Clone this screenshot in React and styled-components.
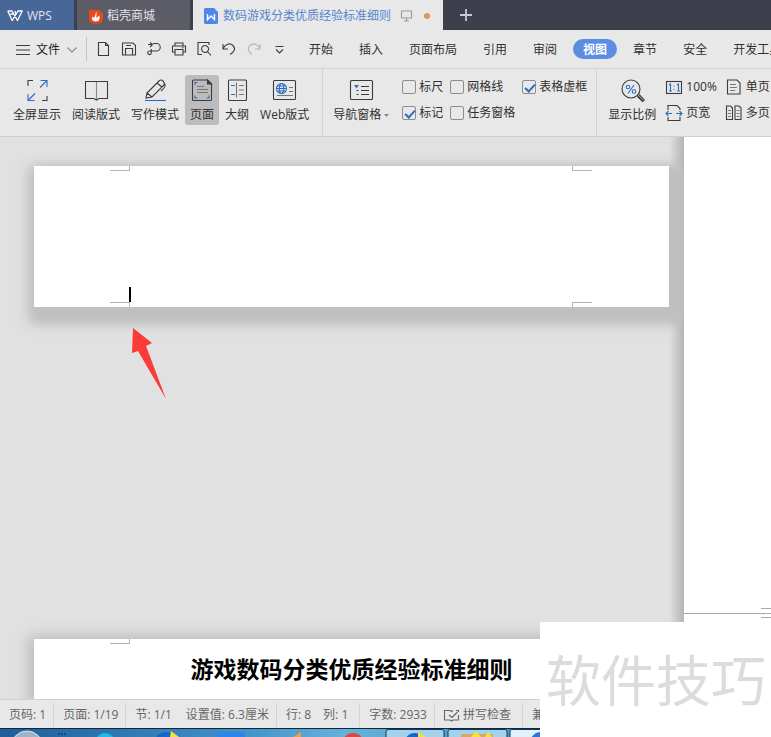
import React from 'react';
import styled, {createGlobalStyle, css} from 'styled-components';

const GlobalStyle = createGlobalStyle`
    * {
        box-sizing: border-box;
    }

    body {
        margin: 0;
        overflow: hidden;
        color: #303030;
        font: 12px/16px "Open Sans", "Noto Sans CJK SC", sans-serif;
    }

    button {
        margin: 0;
        padding: 0;
        border: none;
        background: none;
        color: inherit;
        font: inherit;
        white-space: nowrap;
        cursor: pointer;
    }

    svg {
        display: block;
        flex: none;
        overflow: visible;
    }
`;

const Window = styled.div`
    position: relative;
    display: flex;
    flex-direction: column;
    height: 100vh;
    overflow: hidden;
    background: #e8e8e8;
`;

/* title bar */

const TitleBar = styled.header`
    display: flex;
    flex: none;
    height: 30px;
    background: #3d404c;
`;

const DocTab = styled.button`
    display: flex;
    flex: none;
    align-items: center;
    gap: ${props => props.$gap || 4}px;
    padding: ${props => props.$pad};
    margin-right: ${props => props.$space || 0}px;
    background: ${props => props.$bg};
    color: ${props => props.$color || '#e4e4ea'};
`;

const TabTools = styled.span`
    display: flex;
    align-items: center;
    gap: 12px;
    padding-left: 5px;
`;

const UnsavedDot = styled.i`
    width: 6px;
    height: 6px;
    border-radius: 50%;
    background: #e09a55;
`;

/* menu bar */

const MenuBar = styled.nav`
    display: flex;
    flex: none;
    align-items: center;
    height: 39px;
    padding-left: 16px;
    border-bottom: 1px solid #d2d2d2;
`;

const FileButton = styled.button`
    display: flex;
    flex: none;
    align-items: center;
    gap: 6px;
    padding-top: 2px;
    color: #222;
`;

const MenuDivider = styled.span`
    flex: none;
    width: 1px;
    height: 24px;
    margin: 0 4px 0 9px;
    background: #c4c4c4;
`;

const QuickButton = styled.button`
    display: flex;
    flex: none;
    align-items: center;
    justify-content: center;
    width: 25px;
    height: 24px;
`;

const MenuTabs = styled.div`
    display: flex;
    flex: none;
    gap: 6px;
    padding-left: 8px;
`;

const MenuTab = styled.button`
    height: 20px;
    padding: 2px 10px 0;
    border-radius: 10px;
    ${props => props.$active && css`
        background: #5b8de3;
        color: #fff;
        font-weight: bold;
    `}
`;

/* ribbon */

const Ribbon = styled.section`
    display: flex;
    flex: none;
    height: 68px;
    border-bottom: 1px solid #d0d0d0;
`;

const RibbonGroup = styled.div`
    display: flex;
    flex: none;
    align-items: flex-start;
    gap: 1px;
    padding: 6px ${props => props.$right}px 0 ${props => props.$left}px;

    & + & {
        box-shadow: -1px 0 0 #d2d2d2;
    }
`;

const ToolButton = styled.button`
    display: flex;
    flex-direction: column;
    align-items: center;
    gap: 5px;
    height: 50px;
    padding: 4px 5px 0;
    border-radius: 3px;
    background: ${props => props.$active ? '#bcbcbc' : 'none'};
`;

const ToolLabel = styled.span`
    display: flex;
    align-items: center;
    gap: 3px;
`;

const OptionGrid = styled.div`
    display: grid;
    grid-template-columns: repeat(3, auto);
    grid-auto-rows: 16px;
    gap: 10px 7px;
    padding: 4px 0 0 7px;
`;

const Option = styled.label`
    display: flex;
    align-items: center;
    gap: 3px;
    white-space: nowrap;
`;

const Tick = styled.input`
    position: relative;
    appearance: none;
    width: 14px;
    height: 14px;
    margin: 0;
    border: 1px solid #8e8e8e;
    border-radius: 2px;

    &:checked::after {
        content: '';
        position: absolute;
        left: 4px;
        top: 1px;
        width: 4px;
        height: 8px;
        border: solid #2a6dc0;
        border-width: 0 2px 2px 0;
        transform: rotate(42deg);
    }
`;

const ZoomGrid = styled.div`
    display: grid;
    grid-template-columns: repeat(2, auto);
    grid-auto-rows: 16px;
    gap: 10px 9px;
    padding: 4px 0 0 4px;
`;

const SmallTool = styled.button`
    display: flex;
    align-items: center;
    gap: 4px;
`;

/* document area */

const Workspace = styled.main`
    display: grid;
    grid-template-columns: minmax(0, 1fr) 87px;
    flex: 1;
    min-height: 0;
`;

const PageColumn = styled.div`
    display: flex;
    flex-direction: column;
    justify-content: space-between;
    padding: 29px 15px 0 34px;
    overflow: hidden;
    background:
        linear-gradient(to left, #b4b4b4, rgba(224, 224, 224, 0) 15px),
        #e1e1e1;
`;

const Sheet = styled.article`
    position: relative;
    height: ${props => props.$height}px;
    background: #fff;
    box-shadow: ${props => props.$cut
        ? '0 2px 14px 5px #b8b8b8'
        : '2px 8px 12px 8px #bfbfbf, 10px 8px 10px 6px #bfbfbf'};
`;

const Crop = styled.i`
    position: absolute;
    ${props => props.$x}: ${props => props.$x === 'left' ? 76 : 77}px;
    ${props => props.$y}: 0;
    width: 20px;
    height: 5px;
    border: 0 solid #b4b4b4;
    border-${props => props.$x === 'left' ? 'right' : 'left'}-width: 1px;
    border-${props => props.$y === 'top' ? 'bottom' : 'top'}-width: 1px;
`;

const Caret = styled.i`
    position: absolute;
    left: 95px;
    bottom: 5px;
    width: 2px;
    height: 15px;
    background: #000;
`;

const Pointer = styled.svg`
    position: absolute;
    left: 98px;
    top: 162px;
`;

const DocTitle = styled.h1`
    margin: 0;
    padding-top: 14px;
    color: #000;
    font-size: 23px;
    line-height: 32px;
    text-align: center;
    white-space: nowrap;
`;

const NextPage = styled.div`
    display: flex;
    flex-direction: column;
    justify-content: flex-end;
    padding-bottom: 80px;
    background: #fff;
`;

/* status bar and taskbar */

const StatusBar = styled.footer`
    display: flex;
    flex: none;
    align-items: stretch;
    height: 29px;
    padding: 3px 0 1px;
    border-top: 1px solid #cfcfcf;
    color: #666;
`;

const StatusGroup = styled.div`
    display: flex;
    flex: none;
    align-items: center;
    gap: ${props => props.$gap || 4}px;
    padding: 0 ${props => props.$end || 7}px 0 9px;
    border-right: 1px solid #d4d4d4;
    white-space: nowrap;
`;

const Taskbar = styled.div`
    flex: none;
    height: 9px;
    overflow: hidden;
    border-top: 1px solid #12263c;
    background: linear-gradient(to right, #1f5f98, #3f8fc6 30%, #66b2da 45%, #3a7fb2 80%);
`;

const Watermark = styled.div`
    position: absolute;
    right: 0;
    bottom: 0;
    width: 231px;
    height: 115px;
    padding-left: 6px;
    background: #fff;
    color: #dcdcdc;
    font-family: "Noto Sans CJK SC", sans-serif;
    font-size: 55px;
    line-height: 110px;
    white-space: nowrap;
`;

const INK = '#3c3c3c';
const BLUE = '#2b6fc2';

const Icon = ({w = 16, h = 16, children, color = INK}) => (
    <svg width={w} height={h} viewBox={`0 0 ${w} ${h}`} fill="none" stroke={color} strokeWidth="1.1" aria-hidden="true">
        {children}
    </svg>
);

const WpsLogo = () => (
    <Icon w={16} h={12} color="#fff">
        <path strokeWidth="1.3" strokeLinejoin="round" d="M.8 1H5l5.500 9.500L15.200 1H11L5.200 10.500.8 1M3.500 4H7M9 4l-1.200-3"/>
    </Icon>
);

const FlameLogo = () => (
    <Icon w={14} h={15}>
        <path stroke="none" fill="#e8481c" d="M0 1h10l4 4v5a4.500 4.500 0 0 1-4.500 4.500h-5A4.500 4.500 0 0 1 0 10z"/>
        <path stroke="none" fill="#fff" d="M7 2.500c1.500 2.500 0 4 .5 6.500L10 6.500c1.500 3 0 6-3 6-4 0-4.500-3-3.500-5l1.800 1.500C5.500 7 7 5.500 7 2.500z"/>
    </Icon>
);

const DocLogo = () => (
    <Icon w={14} h={16}>
        <path stroke="none" fill="#4f86e8" d="M1.500 0H10l4 4v10.500a1.500 1.500 0 0 1-1.500 1.500h-11A1.500 1.500 0 0 1 0 14.500v-13A1.500 1.500 0 0 1 1.500 0z"/>
        <path stroke="#fff" strokeWidth="1.4" d="M3.500 6v5.500L7 8l3.500 3.500V6"/>
    </Icon>
);

const quickIcons = [
    ['新建', <path d="M2.500 1.500h7l3 3v10h-10zM9.500 1.500v3h3"/>],
    ['保存', <path d="M4 2h8l2.500 2.500V14h-13V4M1.500 4.500V2H12M4.500 14V7.500h7V14M5 4.500h5"/>],
    ['输出为PDF', <path d="M2 3.500h4M4 1.500l2.500 2L4 6M7 2.500h3.500a3.700 3.700 0 0 1 0 7.500H3.500a1.800 1.800 0 1 0 1.800 1.800V8"/>],
    ['打印', <path d="M4 5V2h8v3M4 11H1.500V5h13v6H12M4 8.500h8V14H4zM11 6.700h1.500"/>],
    ['打印预览', <path d="M6 13.500H2v-12h11V4M9 4.500a3.500 3.500 0 1 0 .1 0M11.500 10.500L15 14.500"/>],
    ['撤销', <path d="M2 3v5h5M2.200 7.500C4 3 9 1.500 12 4.500s1.500 6.500-3 9"/>],
    ['恢复', <path stroke="#b4b4b4" d="M14 3v5H9M13.800 7.500C12 3 7 1.500 4 4.500s-1.500 6.500 2 9"/>],
    ['更多', <path d="M4.500 5.500h8M5 8.500l3.500 3.500L12 8.500"/>],
];

const menuTabs = ['开始', '插入', '页面布局', '引用', '审阅', '视图', '章节', '安全', '开发工具'];

const viewTools = [
    ['全屏显示', <>
        <path d="M2 7V1.500h5M21 17v4.500h-5"/>
        <path stroke={BLUE} d="M14.500 1.500H21V8M21 1.500l-7 7M2 15v6.500h6.500M2 21.500l7-7"/>
    </>],
    ['阅读版式', <>
        <path d="M0.500 2.500h22v17H14l-2.500 1.500L9 19.500H.5z"/>
        <path stroke="#888" d="M11.500 3v17"/>
    </>],
    ['写作模式', <>
        <path d="M3 14L15 2q2-2 4 0t1 4L8 18l-6 1zM3 14l5 4M13 4l5 4M21 5q1 3-4 7"/>
        <path stroke={BLUE} d="M1 21.500h21"/>
    </>],
    ['页面', <>
        <path d="M2.500 1h14l4 4v15.500a1 1 0 0 1-1 1h-17a1 1 0 0 1-1-1V2a1 1 0 0 1 1-1z"/>
        <path fill={INK} d="M16.500 1v4h4z"/>
        <path stroke="#777" d="M6 7.500h7M6 10.500h11M6 13.500h11"/>
        <path stroke={BLUE} d="M4 6V3.500h2.500M4 16.500V19h2.500M18 16.500V19h-2.500"/>
    </>],
    ['大纲', <>
        <rect x="2.500" y="1" width="18" height="20.500" rx="1"/>
        <path stroke={BLUE} d="M5 6.500h4M5 15.500h4"/>
        <path stroke="#777" d="M10.500 3.500v15M13 6.500h5M13 11h5M13 15.500h5"/>
    </>],
    ['Web版式', <>
        <rect x=".5" y="1.500" width="22" height="19" rx="1"/>
        <circle cx="8.500" cy="9.500" r="5" stroke={BLUE}/>
        <ellipse cx="8.500" cy="9.500" rx="2.200" ry="5" stroke={BLUE}/>
        <path stroke={BLUE} d="M3.500 9.500h10M4.500 7h8M4.500 12h8"/>
        <path stroke="#777" d="M16 8.500h4M16 12.500h4M4 16.500h16"/>
    </>],
];

const options = [
    ['标尺', false],
    ['网格线', false],
    ['表格虚框', true],
    ['标记', true],
    ['任务窗格', false],
];

const statusGroups = [
    {items: ['页码: 1']},
    {items: ['页面: 1/19']},
    {items: ['节: 1/1', '设置值: 6.3厘米'], gap: 14},
    {items: ['行: 8', '列: 1'], gap: 12, end: 11},
    {items: ['字数: 2933']},
];

const TitleRow = () => (
    <TitleBar>
        <DocTab $bg="#486799" $pad="2px 22px 0 7px" $space={3}>
            <WpsLogo/>
            WPS
        </DocTab>
        <DocTab $bg="#5b5c66" $pad="2px 35px 0 12px" $space={3}>
            <FlameLogo/>
            稻壳商城
        </DocTab>
        <DocTab $bg="#e8e8e8" $color="#5585d0" $pad="2px 13px 0 11px" $gap={5}>
            <DocLogo/>
            数码游戏分类优质经验标准细则
            <TabTools>
                <Icon w={11} h={12} color="#999">
                    <path d="M.5 1h10v7H.5zM5.500 8v3M3 11h5"/>
                </Icon>
                <UnsavedDot/>
            </TabTools>
        </DocTab>
        <DocTab $bg="none" $pad="0 17px" aria-label="新建标签">
            <Icon w={12} h={12} color="#c8cad2">
                <path strokeWidth="1.8" d="M6 0v12M0 6h12"/>
            </Icon>
        </DocTab>
    </TitleBar>
);

const MenuRow = () => (
    <MenuBar>
        <FileButton>
            <Icon w={14} h={10}>
                <path d="M0 .5h14M0 5h14M0 9.500h14"/>
            </Icon>
            文件
            <Icon w={11} h={6} color="#888">
                <path d="M1.500 .5L6 5l4.500-4.500"/>
            </Icon>
        </FileButton>
        <MenuDivider/>
        {quickIcons.map(([name, drawing]) => (
            <QuickButton key={name} aria-label={name}>
                <Icon>{drawing}</Icon>
            </QuickButton>
        ))}
        <MenuTabs>
            {menuTabs.map(name => (
                <MenuTab key={name} $active={name === '视图'}>{name}</MenuTab>
            ))}
        </MenuTabs>
    </MenuBar>
);

const RibbonRow = () => (
    <Ribbon>
        <RibbonGroup $left={8} $right={9}>
            {viewTools.map(([name, drawing]) => (
                <ToolButton key={name} $active={name === '页面'}>
                    <Icon w={23} h={23}>{drawing}</Icon>
                    <ToolLabel>{name}</ToolLabel>
                </ToolButton>
            ))}
        </RibbonGroup>
        <RibbonGroup $left={5} $right={10}>
            <ToolButton>
                <Icon w={23} h={23}>
                    <rect x=".5" y="1.500" width="22" height="19" rx="1"/>
                    <path fill={BLUE} stroke="none" d="M4 6h5l-2.500 3.500z"/>
                    <path d="M11 7.500h8M11 11.500h8M11 15.500h8M6.500 11.500h2M6.500 15.500h2"/>
                </Icon>
                <ToolLabel>
                    导航窗格
                    <Icon w={5} h={3}>
                        <path fill="#888" stroke="none" d="M0 0h5L2.500 3z"/>
                    </Icon>
                </ToolLabel>
            </ToolButton>
            <OptionGrid>
                {options.map(([name, on]) => (
                    <Option key={name}>
                        <Tick type="checkbox" defaultChecked={on}/>
                        {name}
                    </Option>
                ))}
            </OptionGrid>
        </RibbonGroup>
        <RibbonGroup $left={6} $right={0}>
            <ToolButton>
                <Icon w={23} h={23}>
                    <circle cx="10" cy="10" r="9"/>
                    <path d="M16.500 16.500l5.500 5.500M18 15.500l5 5q.5 1.500-1.500 2l-5-5"/>
                    <path stroke={BLUE} d="M13 6l-6 8.500"/>
                    <circle cx="7" cy="8" r="1.800" stroke={BLUE}/>
                    <circle cx="13" cy="12.500" r="1.800" stroke={BLUE}/>
                </Icon>
                <ToolLabel>显示比例</ToolLabel>
            </ToolButton>
            <ZoomGrid>
                <SmallTool>
                    <Icon>
                        <rect x=".5" y="2.500" width="15" height="12"/>
                        <path stroke={BLUE} d="M3 6l1.500-1v7M8 6.500v1M8 10v1M11 6l1.500-1v7M3 12h3M11 12h3"/>
                    </Icon>
                    100%
                </SmallTool>
                <SmallTool>
                    <Icon>
                        <path d="M1.500 1h9.500l3 3v11H1.500z"/>
                        <path stroke="#777" d="M4 5.500h6M4 8.500h7M4 11.500h5"/>
                    </Icon>
                    单页
                </SmallTool>
                <SmallTool>
                    <Icon>
                        <path d="M2 5V.5h9l3 3V5M2 12v3.500h12V12"/>
                        <path stroke={BLUE} d="M0 8.500h6M10 8.500h6M2.500 6L0 8.500 2.500 11M13.500 6L16 8.500 13.500 11"/>
                    </Icon>
                    页宽
                </SmallTool>
                <SmallTool>
                    <Icon>
                        <path d="M.5 1h4l2 2v11.500h-6zM9 1h4l2 2v11.500H9z"/>
                        <path stroke="#777" d="M2 5.500h3M2 8.500h3M2 11.500h3M10.500 5.500h3M10.500 8.500h3M10.500 11.500h3"/>
                    </Icon>
                    多页
                </SmallTool>
            </ZoomGrid>
        </RibbonGroup>
    </Ribbon>
);

const Pages = () => (
    <Workspace>
        <PageColumn>
            <Sheet $height={141}>
                <Crop $x="left" $y="top"/>
                <Crop $x="right" $y="top"/>
                <Crop $x="left" $y="bottom"/>
                <Crop $x="right" $y="bottom"/>
                <Caret/>
                <Pointer width="35" height="72" viewBox="0 0 35 72">
                    <path fill="#fb3b38" d="M1 0l19 15-6 3 20 53L6 23l-6 2z"/>
                </Pointer>
            </Sheet>
            <Sheet $height={60} $cut>
                <Crop $x="left" $y="top"/>
                <DocTitle>游戏数码分类优质经验标准细则</DocTitle>
            </Sheet>
        </PageColumn>
        <NextPage>
            <svg width="87" height="11" viewBox="0 0 87 11" fill="none" stroke="#aaa">
                <path d="M0 5.500h87M77 .5h10M77 9.500h10"/>
            </svg>
        </NextPage>
    </Workspace>
);

const StatusRow = () => (
    <StatusBar>
        {statusGroups.map(({items, gap, end}) => (
            <StatusGroup key={items[0]} $gap={gap} $end={end}>
                {items.map(item => <span key={item}>{item}</span>)}
            </StatusGroup>
        ))}
        <StatusGroup $end={11}>
            <Icon w={15} h={13} color="#666">
                <path d="M9 1.500l-1.500 1-1.500-1H.5v9.500H6l1.500 1 1.500-1h5.500V6M12 1.500h2.500V3M5 6l3 2.500L13.500 3"/>
            </Icon>
            拼写检查
        </StatusGroup>
        <StatusGroup>兼</StatusGroup>
    </StatusBar>
);

const App = () => (
    <Window>
        <GlobalStyle/>
        <TitleRow/>
        <MenuRow/>
        <RibbonRow/>
        <Pages/>
        <StatusRow/>
        <Taskbar>
            <svg width="540" height="8" viewBox="0 0 540 8">
                <circle cx="27" cy="18" r="16" fill="#9fb4c6" stroke="#dbe8f2"/>
                <path d="M58 5h2M61 5h2M64 5h2" stroke="#0c2238"/>
                <circle cx="105" cy="14" r="10" fill="#22b8ee"/>
                <circle cx="166" cy="15" r="12" fill="#1765c8"/>
                <path d="M171 2l8 6h-9z" fill="#f6e23c"/>
                <rect x="217" y="3" width="28" height="8" rx="3" fill="#2a86ea"/>
                <path d="M293 8l8-5v5z" fill="#f0a03c"/>
                <circle cx="353" cy="15" r="11" fill="#d84a40"/>
                <g stroke="#0f3a5e" fill="#a4d2ea">
                    <rect x="386" y=".5" width="58" height="12" rx="2"/>
                    <rect x="448" y=".5" width="59" height="12" rx="2"/>
                    <rect x="510" y=".5" width="59" height="12" rx="2" fill="#e2f2fb"/>
                </g>
                <circle cx="415" cy="15" r="11" fill="#1765c8"/>
                <path d="M418 3l8 5h-8z" fill="#f6e23c"/>
                <path d="M461 5h32v4h-32z" fill="#d9a866"/>
                <path d="M471 8l5-6 5 6zM485 8l3-5 4 5z" fill="#f6e23c"/>
                <circle cx="541" cy="14" r="11" fill="#2d74e0"/>
            </svg>
        </Taskbar>
        <Watermark>软件技巧</Watermark>
    </Window>
);

export default App;
